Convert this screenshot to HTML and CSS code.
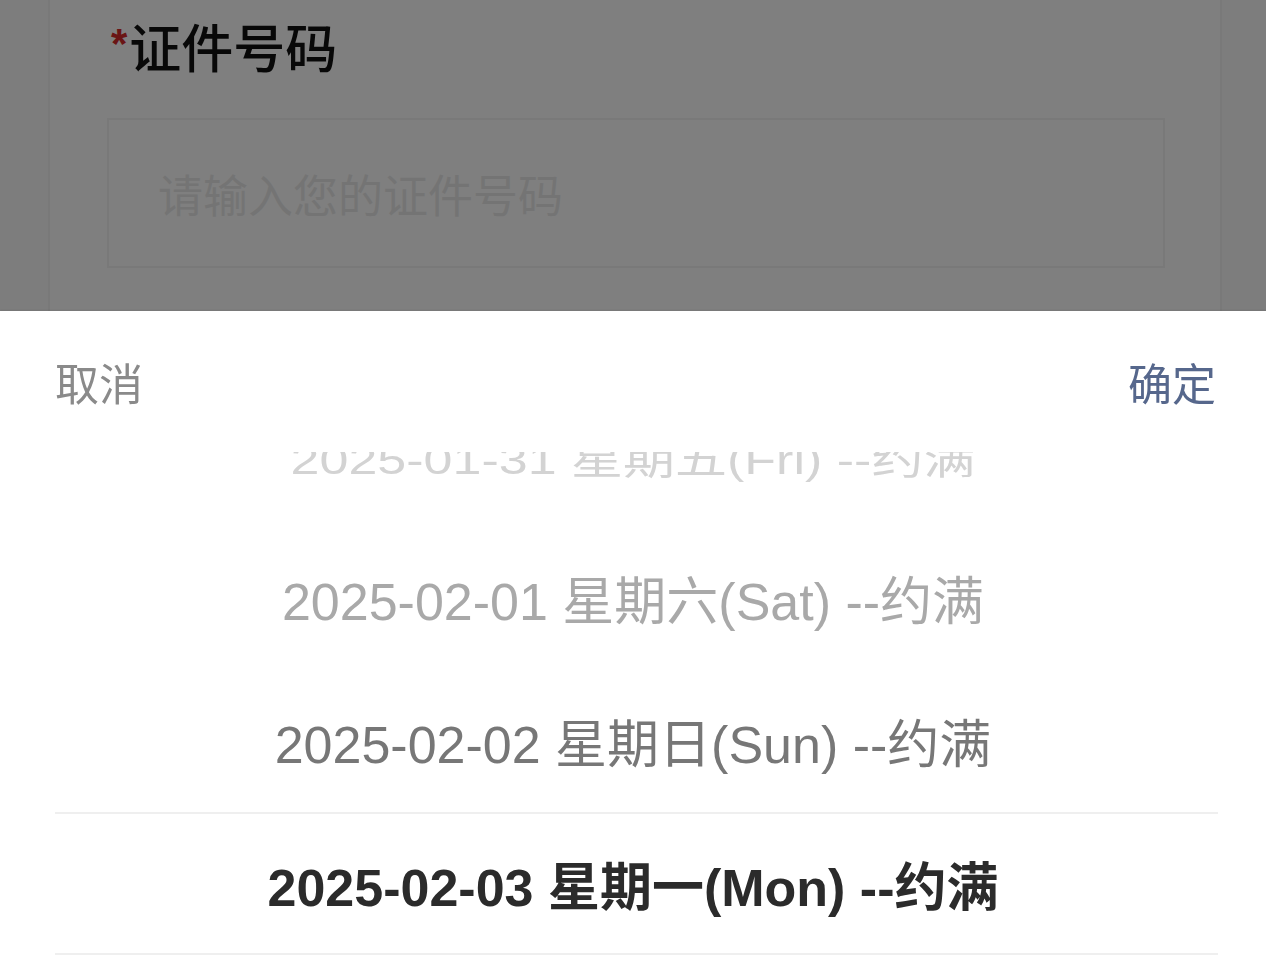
FILE: index.html
```html
<!DOCTYPE html>
<html lang="zh-CN">
<head>
<meta charset="utf-8">
<title>预约日期</title>
<link rel="stylesheet" href="styles.css">
</head>
<body>
<div class="page">
  <div class="card">
    <div class="field">
      <div class="label"><span class="req">*</span>证件号码</div>
      <div class="input"><span class="ph">请输入您的证件号码</span></div>
    </div>
  </div>
</div>
<div class="mask"></div>
<div class="sheet">
  <div class="sheet-head">
    <span class="cancel">取消</span>
    <span class="ok">确定</span>
  </div>
  <div class="wheel">
    <div class="track">
      <div class="row row-far"><span class="txt">2025-01-31 星期五(Fri) --约满</span></div>
      <div class="row row-mid"><span class="txt">2025-02-01 星期六(Sat) --约满</span></div>
      <div class="row row-near"><span class="txt">2025-02-02 星期日(Sun) --约满</span></div>
      <div class="row row-sel"><span class="txt">2025-02-03 星期一(Mon) --约满</span></div>
    </div>
    <div class="indicator"></div>
  </div>
</div>
</body>
</html>
```
FILE: styles.css
```css
html, body {
  margin: 0;
  padding: 0;
}
body {
  width: 1266px;
  height: 968px;
  overflow: hidden;
  background: #fbfbfb;
  font-family: "Liberation Sans", "Noto Sans CJK SC", sans-serif;
}
.page {
  height: 968px;
}
.card {
  margin-left: 48px;
  width: 1170px;
  height: 968px;
  background: #ffffff;
  border-left: 2px solid #f3f3f3;
  border-right: 2px solid #f3f3f3;
}
.field {
  padding-left: 57px;
}
.label {
  padding-top: 16px;
  padding-left: 4px;
  font-family: "Noto Sans CJK SC", sans-serif;
  font-size: 52px;
  font-weight: 500;
  line-height: 60px;
  color: #111111;
}
.req {
  display: inline-block;
  vertical-align: top;
  font-family: "Liberation Sans", sans-serif;
  font-size: 42px;
  font-weight: 700;
  line-height: 56px;
  color: #d42a2a;
  margin-right: 2px;
}
.input {
  margin-top: 42px;
  width: 1058px;
  height: 150px;
  box-sizing: border-box;
  border: 2px solid #f3f3f3;
  display: flex;
  align-items: center;
  padding-left: 49px;
}
.ph {
  font-family: "Noto Sans CJK SC", sans-serif;
  font-size: 45px;
  color: #e9e9e9;
}
.mask {
  position: fixed;
  inset: 0;
  background: rgba(0, 0, 0, 0.5);
}
.sheet {
  position: fixed;
  left: 0;
  right: 0;
  top: 311px;
  bottom: 0;
  background: #ffffff;
  box-shadow: 0 -1px 2px rgba(0, 0, 0, 0.08);
}
.sheet-head {
  height: 141px;
  padding: 0 50px 0 55px;
  display: flex;
  justify-content: space-between;
  align-items: center;
  font-family: "Noto Sans CJK SC", sans-serif;
  font-size: 44px;
}
.cancel {
  color: #8a8a8a;
}
.ok {
  color: #56678c;
}
.wheel {
  position: relative;
  height: 516px;
  overflow: hidden;
}
.track {
  margin-top: -69px;
}
.row {
  height: 143px;
  display: flex;
  align-items: center;
  justify-content: center;
  font-size: 52px;
  white-space: nowrap;
}
.row-far {
  color: #d3d3d3;
}
.row-far .txt {
  display: inline-block;
  transform: translateY(2px) scaleY(0.78);
}
.row-mid {
  color: #a9a9a9;
}
.row-near {
  color: #777777;
}
.row-sel {
  color: #2b2b2b;
  font-weight: 600;
}
.indicator {
  position: absolute;
  left: 55px;
  right: 48px;
  top: 360px;
  height: 139px;
  border-top: 2px solid #efefef;
  border-bottom: 2px solid #efefef;
  pointer-events: none;
}
```
